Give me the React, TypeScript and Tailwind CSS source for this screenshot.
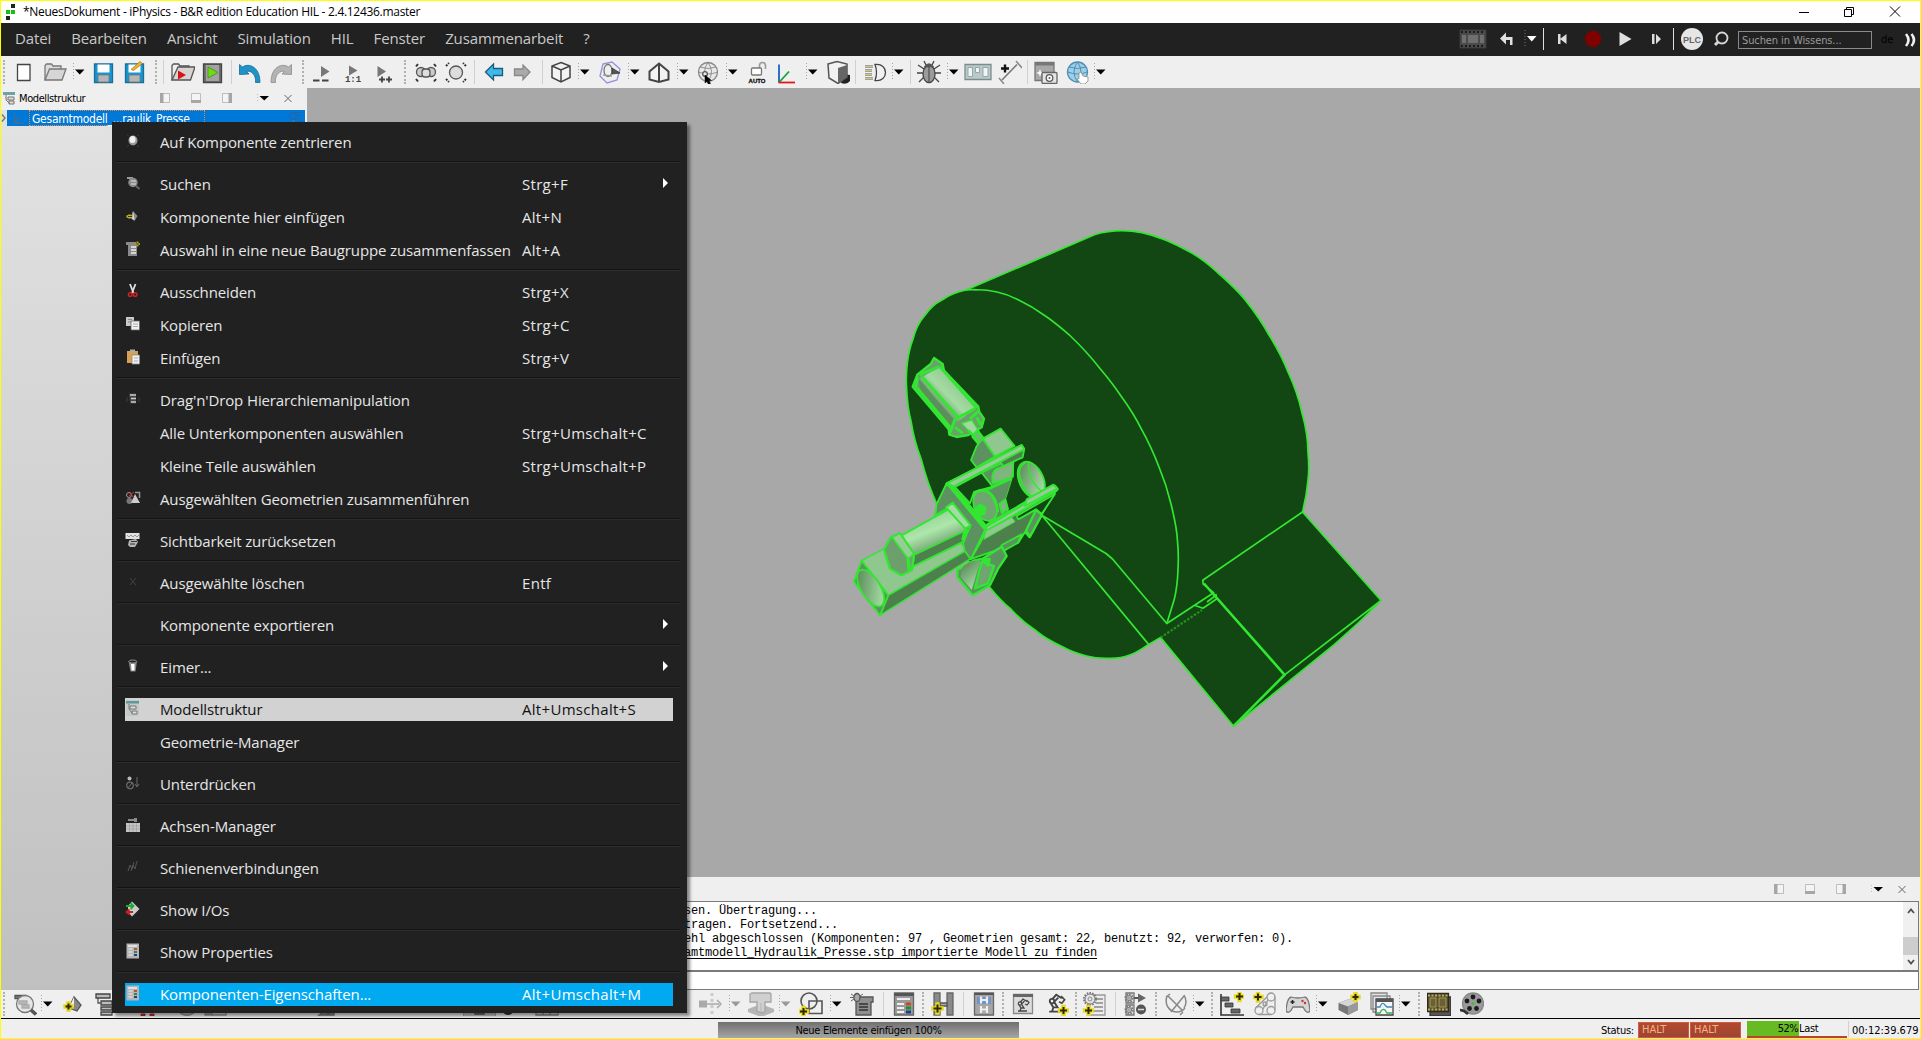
import React from "react";

type Kids = { children?: React.ReactNode };

/* ---------- shared pieces ---------- */

function Ico({ m = "", w = "w-6", box = "0 0 24 24", children }: Kids & { m?: string; w?: string; box?: string }) {
  return (
    <svg className={`h-6 shrink-0 ${w} ${m}`} viewBox={box} fill="none" stroke="#555" strokeWidth="1.3">
      {children}
    </svg>
  );
}

function Handle({ m }: { m: string }) {
  return <span className={`h-6 w-0 shrink-0 border-l-2 border-dotted border-[#b0b0b0] ${m}`} />;
}

function Sep({ m }: { m: string }) {
  return <span className={`h-6 w-px shrink-0 bg-[#cfcfcf] ${m}`} />;
}

function Drop({ m, c = "#000" }: { m: string; c?: string }) {
  return (
    <svg className={`h-6 w-3 shrink-0 ${m}`} viewBox="0 0 12 24">
      <path d="M.5 3v18" stroke="#a5a5a5" strokeWidth="1" strokeDasharray="1 2" />
      <path d="M2 9.5h9.5L6.75 14.5z" fill={c} />
    </svg>
  );
}

function Plus({ x, y, s = 4 }: { x: number; y: number; s?: number }) {
  const d = `M${x - s} ${y}h${2 * s}M${x} ${y - s}v${2 * s}`;
  return (
    <>
      <path d={d} stroke="#e8d81c" strokeWidth="4.4" strokeLinecap="square" />
      <path d={d} stroke="#2e2a00" strokeWidth="2" />
    </>
  );
}

function Robot({ x = 0, y = 0 }: { x?: number; y?: number }) {
  return (
    <g transform={`translate(${x} ${y})`}>
      <path d="M2 14h9M4 14l1-3-2.5-4 4.5-5 4 2.5M5 11h3l-2.5-4 3-3" stroke="#444" strokeWidth="1.3" />
      <path d="M10.5 3l2.5 2.5-2 2.5-2-1" stroke="#444" strokeWidth="1.2" />
      <circle cx="4" cy="6.5" r="1.6" fill="#eee" stroke="#444" />
    </g>
  );
}

function Gear({ x, y, r }: { x: number; y: number; r: number }) {
  return (
    <>
      <circle cx={x} cy={y} r={r} stroke="#777" strokeWidth="2" strokeDasharray="1.5 1.2" />
      <circle cx={x} cy={y} r={r - 1} stroke="#777" strokeWidth="1" fill="#e4e4e4" />
      <circle cx={x} cy={y} r={r / 3} stroke="#777" strokeWidth=".8" />
    </>
  );
}

function DockButtons() {
  return (
    <svg className="h-4 w-[136px] shrink-0" viewBox="0 0 136 16" fill="none" stroke="#bdbdbd">
      <path d="M1.5 3.5h9v9h-9zM32.5 3.5h9v9h-9zM63.5 3.5h9v9h-9z" fill="#f4f4f4" />
      <path d="M1 3h3.500v10H1zM32 10h10v3H32zM69.5 3H73v10h-3.500z" fill="#a6a6a6" stroke="none" />
      <path d="M98.5 4v8" strokeDasharray="1 2" />
      <path d="M100.5 6h9.500l-4.750 4.500z" fill="#000" stroke="none" />
      <path d="M125.5 5l7 7m0-7l-7 7" stroke="#666" />
    </svg>
  );
}

/* ---------- title and menu bars ---------- */

function TitleBar() {
  return (
    <div className="flex h-[22px] shrink-0 items-center bg-white">
      <svg className="ml-1 h-4 w-3" viewBox="0 0 12 16">
        <path d="M6 0h4v4H6zM1 12h4v4H1z" fill="#222" />
        <path d="M1 6h4v4H1zM6 6h4v4H6z" fill="#16c016" />
      </svg>
      <span className="ml-[6px] font-['Open_Sans','Noto_Sans',sans-serif] text-[12px] leading-none tracking-[-0.3px] whitespace-nowrap text-black">
        *NeuesDokument - iPhysics - B&amp;R edition Education HIL - 2.4.12436.master
      </span>
      <svg className="mr-[19px] mb-px ml-auto h-3 w-[103px]" viewBox="0 0 103 12" fill="none" stroke="#000">
        <path d="M1 6.5h10M46.5 3.5h7v7h-7zM48.5 3V1.500h7v7H54M92 .5l10 10m0-10l-10 10" />
      </svg>
    </div>
  );
}

const menus = ["Datei", "Bearbeiten", "Ansicht", "Simulation", "HIL", "Fenster", "Zusammenarbeit", "?"];

function MenuBar() {
  return (
    <div className="flex h-[33px] shrink-0 items-center bg-[#212121] font-['Open_Sans','Noto_Sans',sans-serif] text-[#c9c9c9]">
      <div className="mb-[2px] ml-[14px] flex gap-5 text-[15px] leading-none tracking-[-0.12px]">
        {menus.map((t) => (
          <span key={t}>{t}</span>
        ))}
      </div>
      <svg className="ml-auto h-[33px] w-[280px] shrink-0" viewBox="1456 23 280 33" fill="none">
        <path d="M1460 30h26v18h-26z" fill="#4b4b4b" stroke="#3a3a3a" />
        <path d="M1461 32h24M1461 46h24" stroke="#1c1c1c" strokeWidth="2" strokeDasharray="2 2" />
        <path d="M1462 35h4v8h-4zM1468 35h10v8h-10zM1480 35h4v8h-4z" fill="#6f6f6f" />
        <path d="M1500 38.500l6-6v4.500h6.500v8h-2.500v-5h-4v4.500z" fill="#e0e0e0" />
        <path d="M1525 30v17" stroke="#777" strokeDasharray="1 2" />
        <path d="M1527 36h9.500l-4.750 5.500z" fill="#fff" />
        <path d="M1543.5 28v22M1673.5 28v22" stroke="#e0e0e0" />
        <path d="M1558 34h2.500v10h-2.500zM1566.5 34v10l-6.500-5z" fill="#ddd" />
        <circle cx="1593" cy="39" r="8.2" fill="#800000" />
        <path d="M1619.5 32v14l12-7z" fill="#e0e0e0" />
        <path d="M1652 34h2.500v10h-2.500zM1656 34v10l5-5z" fill="#ddd" />
        <circle cx="1692" cy="39" r="11" fill="#e6e6e6" />
        <text x="1692" y="42.5" textAnchor="middle" fontSize="9" fontWeight="bold" fill="#666" fontFamily="Liberation Sans, sans-serif">
          PLC
        </text>
        <circle cx="1722" cy="38" r="5.5" stroke="#d8d8d8" strokeWidth="1.8" />
        <path d="M1718 42l-3 3" stroke="#d8d8d8" strokeWidth="3" />
      </svg>
      <div className="ml-[2px] flex h-[18px] w-[134px] shrink-0 items-center border border-[#8a8a8a] pt-px pl-[3px] font-['DejaVu_Sans_Condensed','Open_Sans',sans-serif] text-[11px] leading-none tracking-[-0.1px] text-[#9a9a9a]">
        Suchen in Wissens...
      </div>
      <span className="ml-[9px] w-[14px] shrink-0 font-['DejaVu_Sans_Condensed','Open_Sans',sans-serif] text-[11px] leading-none text-black">de</span>
      <svg className="mr-[3px] ml-[10px] h-[14px] w-3 shrink-0" viewBox="0 0 12 14" fill="none" stroke="#f0f0f0" strokeWidth="2.6">
        <path d="M1 1q5 6 0 12M6.5 1q5 6 0 12" />
      </svg>
    </div>
  );
}

/* ---------- upper toolbar ---------- */

function TopToolbar() {
  return (
    <div className="flex h-8 shrink-0 items-center bg-[#efefef]">
      <Handle m="ml-[2px]" />
      <Ico m="ml-[7px]">
        <path d="M5.5 4.500h12.500v16h-12.500z" fill="#fff" stroke="#444" />
      </Ico>
      <Ico m="ml-[7px]">
        <path d="M2 20V5.500L3.500 4h5l1.500 2h8v3" fill="#ddd" stroke="#777" />
        <path d="M2 20L6.500 9H23l-4 11z" fill="#d6d6d6" stroke="#777" />
      </Ico>
      <Drop m="ml-[6px]" />
      <Ico m="ml-[7px]">
        <path d="M2.5 4h18v18.500h-18z" fill="#1796cf" stroke="#1a6f98" />
        <path d="M5.5 4.500h12v8h-12z" fill="#fff" stroke="none" />
        <path d="M6 15h11v7H6z" fill="#b6b6b6" stroke="#777" strokeWidth=".8" />
      </Ico>
      <Ico m="ml-[7px]">
        <path d="M2.5 4h18v18.500h-18z" fill="#1796cf" stroke="#1a6f98" />
        <path d="M5.5 4.500h12v8h-12z" fill="#fff" stroke="none" />
        <path d="M6 15h11v7H6z" fill="#b6b6b6" stroke="#777" strokeWidth=".8" />
        <path d="M8 9.500l9-8 2.500 2-9 7z" fill="#f1b52c" stroke="#9a7420" strokeWidth=".7" />
      </Ico>
      <Handle m="ml-[8px]" />
      <Sep m="ml-[6px]" />
      <Ico m="ml-[7px]">
        <path d="M1 20V5.500L2.500 4h5l1.500 2h9l-1 3" fill="#eee" />
        <path d="M1 20L7 7h17l-4.500 13z" fill="#d4d4d4" />
        <path d="M7 10.500v9l8-4.500z" fill="#e01010" stroke="none" />
      </Ico>
      <Ico m="ml-[5px]">
        <path d="M3.5 4h18v18.500h-18z" fill="#6d6d6d" stroke="#444" />
        <path d="M6 5h13v16H6z" fill="#a2a2a2" stroke="none" />
        <path d="M8 7v11l10-5.500z" fill="#6ddb16" stroke="#3b8708" strokeWidth=".7" />
      </Ico>
      <Sep m="ml-[7px]" />
      <Ico m="ml-[6px]">
        <path d="M1.5 13V4.500l3 2.500C11 2.500 22 7 22 22.500h-4.500C18.500 15 13 10 8.500 11.500l2.500 2.500-9.500.5z" fill="#1d93c8" stroke="#186a90" strokeWidth=".8" />
      </Ico>
      <Ico m="ml-[7px]">
        <path d="M22.5 13V4.500l-3 2.500C13 2.500 2 7 2 22.500h4.500C5.500 15 11 10 15.500 11.500L13 14l9.500.5z" fill="#b4b4b4" stroke="#8a8a8a" strokeWidth=".8" />
      </Ico>
      <Handle m="ml-[9px]" />
      <Ico m="ml-[5px]">
        <path d="M12 6v11l8.500-5.500z" fill="#777" stroke="none" />
        <path d="M4 20.500h6.500M13 20.500h6.500" stroke="#444" strokeWidth="2.2" />
      </Ico>
      <Ico m="ml-[8px]">
        <path d="M8 5.500v10l8.500-5z" fill="#777" stroke="none" />
        <text x="12" y="22" textAnchor="middle" fontSize="9" fontWeight="bold" fill="#444" stroke="none" fontFamily="Liberation Mono, monospace">
          1:1
        </text>
      </Ico>
      <Ico m="ml-[7px]">
        <path d="M5.500 6v11l8.500-5.500z" fill="#777" stroke="none" />
        <path d="M7 19.500h6M10 16.500v6M14 19.500h6M17 16.500v6" stroke="#444" strokeWidth="1.8" />
      </Ico>
      <Handle m="ml-[8px]" />
      <Ico m="ml-[8px]">
        <path d="M2 6.500l2-2.500M22 6.500L20 4M2 19l2 2.500M22 19l-2 2.500" stroke="#333" strokeWidth="2" />
        <circle cx="7" cy="12" r="4.5" fill="#ccc" />
        <circle cx="17" cy="12" r="4.5" fill="#ccc" />
        <rect x="8" y="9" width="8" height="8" rx="3" fill="#ddd" />
      </Ico>
      <Ico m="ml-[6px]">
        <path d="M2 6l3-3M22 6l-3-3M2 19l3 3M22 19l-3 3" stroke="#333" strokeWidth="2" strokeDasharray="2 1" />
        <circle cx="12" cy="12.5" r="6.5" fill="#dcdcdc" />
      </Ico>
      <Sep m="ml-[6px]" />
      <Ico m="ml-[7px]">
        <path d="M3.5 12l8-8v4.500h9v7h-9V20z" fill="#3fb9ea" stroke="#1d5b78" />
      </Ico>
      <Ico m="ml-[4px]">
        <path d="M20 12l-7-7v4H4.500v6.500H13V19.500z" fill="#aaa" stroke="#888" />
      </Ico>
      <Sep m="ml-[8px]" />
      <Ico m="ml-[6px]">
        <path d="M12 2.500l9 3.500v11.500l-9 4.500-9-4.500V6zM3 6l9 4 9-4M12 10v12" fill="#f3f3f3" stroke="#444" strokeWidth="1.5" />
      </Ico>
      <Drop m="ml-[5px]" />
      <Ico m="ml-[8px]">
        <path d="M5 4l9-2 8 7-3 11-10 3-7-7z" stroke="#9496d8" strokeWidth="1.4" />
        <ellipse cx="10" cy="10.5" rx="4" ry="6" stroke="#777" />
        <path d="M14 8v6l8-1z" fill="#555" stroke="#333" strokeWidth=".8" />
        <path d="M5 15l9 1" stroke="#999" />
      </Ico>
      <Drop m="ml-[6px]" />
      <Ico m="ml-[7px]">
        <path d="M12 3.500l9.500 8v8L12 22l-9.500-2.500v-8zM12 3.500V22" fill="#f3f3f3" stroke="#444" strokeWidth="2" />
      </Ico>
      <Drop m="ml-[6px]" />
      <Ico m="ml-[7px]">
        <circle cx="12" cy="12" r="9.5" fill="#e9e9e9" stroke="#888" />
        <path d="M2.5 12q9.500 4 19 0M4 7q8 3 16 0M12 2.500q-7 9 0 19M12 2.500q7 9 0 19" stroke="#888" strokeWidth=".9" />
        <circle cx="9" cy="14" r="2.3" fill="#eee" />
        <path d="M9 15v8l2-1.500 1.500 3 2-1-1.500-3h2.500z" fill="#000" stroke="#000" strokeWidth=".5" />
      </Ico>
      <Drop m="ml-[6px]" />
      <Ico m="ml-[7px]">
        <path d="M14.5 9V5.500a3 3 0 016 0V9" stroke="#999" strokeWidth="1.6" />
        <rect x="6.5" y="8" width="10" height="7" rx="1" fill="#fff" stroke="#777" />
        <text x="12" y="22.5" textAnchor="middle" fontSize="6" fontWeight="900" fill="#111" stroke="#111" strokeWidth=".3" fontFamily="Liberation Sans, sans-serif">
          AUTO
        </text>
      </Ico>
      <Ico m="ml-[6px]">
        <path d="M4 4.500v18" stroke="#1565c0" strokeWidth="1.8" />
        <path d="M4 22.500l10-11" stroke="#0fa53a" strokeWidth="1.8" />
        <path d="M3.5 22.500H20" stroke="#e01a1a" strokeWidth="1.8" />
      </Ico>
      <Drop m="ml-[7px]" />
      <Ico m="ml-[9px]">
        <path d="M16 14l7 1v6q-3 4-9 2z" fill="#222" stroke="none" />
        <path d="M1 4l9-2.500L20 4v13l-9 6.500L2 18z" fill="#f1f1f1" stroke="#555" strokeWidth="1.5" />
        <path d="M11 8l9-3v12l-9 6z" fill="#666" stroke="none" />
      </Ico>
      <Sep m="ml-[4px]" />
      <Ico m="ml-[7px]">
        <path d="M2 6.500h8M2 10.500h7M2 14.500h7M2 18.500h8" stroke="#555" strokeWidth="2" />
        <path d="M2 6.500h8M2 10.500h7M2 14.500h7M2 18.500h8" stroke="#e6e38a" strokeWidth=".8" />
        <path d="M12 4.500c14-2 14 18 0 16q3-8 0-16z" fill="#f1f1f1" stroke="#444" />
      </Ico>
      <Drop m="ml-[5px]" />
      <Sep m="ml-[6px]" />
      <Ico m="ml-[6px]">
        <path d="M7 9L1 5M6 13H0M7 17l-5 5M17 9l6-4M18 13h6M17 17l5 5M9 5L7 1M15 5l2-4" stroke="#444" />
        <ellipse cx="12" cy="14" rx="6" ry="8.5" fill="#9b9b9b" stroke="#444" />
        <path d="M8 6.500q4-5 8 0z" fill="#555" />
        <path d="M12 7v15" />
      </Ico>
      <Drop m="ml-[6px]" />
      <Ico m="ml-[5px]" w="w-7" box="0 0 28 24">
        <path d="M1 4.500h26v15H1z" fill="#b9c8c8" stroke="#7f8c8c" />
        <path d="M4 7.500h4.500v9H4zM11.500 7.500h4v5h-4zM19 7.500h5v9h-5z" fill="#eef3f3" stroke="#8c9999" strokeWidth=".8" />
      </Ico>
      <Ico m="ml-[6px]">
        <path d="M1 18l5 6M18 1l6 7" stroke="#888" strokeWidth="1.5" />
        <path d="M4 20L19 4.500" stroke="#777" strokeWidth="1.6" />
        <path d="M3 8.500h8M7 4.500v8" stroke="#111" strokeWidth="2.4" />
      </Ico>
      <Sep m="ml-[5px]" />
      <Ico m="ml-[6px]">
        <path d="M1 2.500h19v18H1z" fill="#a8a8a8" stroke="#777" />
        <path d="M1 2.500h19v3H1z" fill="#777" stroke="none" />
        <path d="M6 9l1 3 3 1-3 1-1 3-1-3-3-1 3-1z" fill="#fff" stroke="none" />
        <rect x="8" y="12.5" width="15" height="11" rx="1" fill="#e5e5e5" stroke="#666" />
        <circle cx="15.5" cy="18" r="3.3" fill="#fff" stroke="#555" />
        <circle cx="15.5" cy="18" r="1" fill="#555" stroke="none" />
      </Ico>
      <Ico m="ml-[8px]">
        <circle cx="11.5" cy="12" r="10" fill="#9dcfe8" stroke="#4f8fb3" />
        <path d="M2 12q9.500 4 19 0M3 7q8 3 17 0M11.500 2q-7 10 0 20M11.500 2q7 10 0 20" stroke="#4f8fb3" strokeWidth="1" />
        <path d="M13 13l2-1 2 4 5 1v4l-3 3h-4l-4-5 2-.5z" fill="#fff" stroke="#888" strokeWidth=".8" />
      </Ico>
      <Drop m="ml-[4px]" />
    </div>
  );
}

/* ---------- model structure dock ---------- */

function ModelDock() {
  return (
    <div className="flex w-[304px] shrink-0 flex-col bg-[#efefef] font-['DejaVu_Sans_Condensed','Open_Sans',sans-serif]">
      <div className="flex h-[22px] shrink-0 items-center pb-[2px]">
        <svg className="ml-[2px] h-4 w-3 shrink-0" viewBox="0 0 12 16" fill="none">
          <path d="M0 2h12v3H0z" fill="#6fa3a3" />
          <path d="M3 5v5l4 4M5 7h6v3H5zM6 11h5v3H6z" stroke="#777" fill="#ddd" />
        </svg>
        <span className="ml-[4px] text-[11px] leading-none tracking-[-0.4px] whitespace-nowrap text-black">Modellstruktur</span>
        <span className="ml-auto flex pr-[10px]">
          <DockButtons />
        </span>
      </div>
      <div className="flex-1 bg-linear-to-b from-[#e2e2e2] to-[#c0c0c0]">
        <div className="flex h-4 items-center">
          <svg className="h-4 w-[6px] shrink-0" viewBox="0 0 6 16" fill="none">
            <path d="M1 4.500l3 3.500-3 3.500" stroke="#777" strokeWidth="1.4" />
          </svg>
          <div className="flex h-4 flex-1 items-center bg-[#0078d7]">
            <svg className="ml-[5px] h-4 w-[12px] shrink-0" viewBox="0 0 12 16" fill="none" stroke="#3f6f98" strokeWidth="1.4">
              <path d="M2.500 3v10H12M2.500 13l5-6" />
            </svg>
            <span className="ml-[5px] flex h-4 w-[176px] items-center border border-dotted border-[#e88a3a] pt-[2px] pl-[2px] text-[12px] leading-none tracking-[-0.25px] whitespace-nowrap text-white">
              Gesamtmodell_...raulik_Presse
            </span>
            <svg className="mr-[4px] ml-auto h-4 w-3" viewBox="0 0 12 16" fill="none" stroke="#29649b">
              <circle cx="4" cy="6" r="3.5" />
              <path d="M6 2.500h6M8 5.500h4M8 8.500h4M8 11.500h4" />
              <path d="M2 13h5M4.500 10.500v5" stroke="#6a8a3a" />
            </svg>
          </div>
        </div>
      </div>
    </div>
  );
}

/* ---------- 3D viewport ---------- */

function Viewport() {
  return (
    <svg className="h-[789px] w-full shrink-0 bg-[#a8a8a8]" viewBox="307 88 1613 789" fill="none" stroke="#32e632" strokeWidth="1.7" strokeLinejoin="round">
      <defs>
        <linearGradient id="cylA" x1="0" y1="1" x2="1" y2="0">
          <stop offset=".25" stopColor="#4f7f4f" />
          <stop offset=".5" stopColor="#a5dca3" />
          <stop offset=".75" stopColor="#8fc78f" />
        </linearGradient>
        <linearGradient id="cylB" x1="0" y1="0" x2=".5" y2="1">
          <stop offset=".2" stopColor="#8fcf8f" />
          <stop offset=".5" stopColor="#aee6ac" />
          <stop offset=".9" stopColor="#5a8a5a" />
        </linearGradient>
        <linearGradient id="bore" x1="0" y1="0" x2=".6" y2="1">
          <stop offset="0" stopColor="#4f7f4f" />
          <stop offset="1" stopColor="#a5dca3" />
        </linearGradient>
      </defs>
      <path
        d="M966 290L1073 244 1095 234.500C1112 229.500 1128 230 1142 232.600 1158 236 1174 243 1190 252 1201 258 1209 264.500 1217.500 272.500 1228 281.500 1237 290 1245 299.600 1254 311 1262 322 1269 335 1277 348 1283 359 1288 372 1294 385 1299 399 1302 413 1306 427 1308 440 1308 453 1309 463 1309 472 1308 480 1307 492 1305 502 1302.500 512L1381 600.500C1367 615 1350 631 1334.500 644.400L1233.600 726.200 1160.600 637.600 1148.600 644.400C1142 649 1136 653 1129.700 655 1123 657.500 1116 658.500 1109 658.300 1101 658.500 1094 658 1086.600 656 1078 654 1070 651 1062.500 646.800 1052 642 1043 637 1035 630 1026 624 1018 617 1010.800 609 1003 603 996 595 989.500 587 967 562 949 534 936.800 504 930 489 925 474 921 458.500 916 446 913 434 911 421 908 410 907 398 906.500 386 906 378 906.500 370 907.500 362 908.500 354 910 347 912.700 340 915 331 919 322 924.800 315.500 930 308 936 303 942 300 949 295 957 292 966 290z"
        fill="#124612"
      />
      <path
        d="M966 290C970 289.500 973 289.500 976.400 289.800 984 289.500 990 290.500 997 292 1004 293.500 1011 296 1017.700 299.600 1027 304 1037 310 1045 315.800 1053 321 1061 328 1069.400 335 1081 346 1091 357 1100.400 369 1108 378 1115 387 1121 396 1129 407 1136 418 1141.700 429.700 1148 441 1154 454 1159 467 1164 479 1168 491 1171 504 1174 516 1177 529 1177.500 541.300 1178.500 551 1178.500 562 1177.900 571.700 1177.500 581 1176.500 590 1174.400 598.800 1172 607 1169.500 615 1166.800 623.500"
      />
      <path d="M1148.600 644.400L1041.800 515.300 1106 553.500 1112.500 559 1166.800 623.500 1214 592.500M1302.500 512L1202.700 580.200l.5 4 11 9M1284.600 674.800L1381 600.500M1195 605.500l8 2.700 13.800-9.400-1-5M1207 602l8-6" />
      <path d="M1204 583.500L1284.600 674.800 1233.600 726.200" strokeWidth="2.600" />
      <path d="M1160.600 637.600L1202 610" strokeDasharray="2.5 1.5" stroke="#229222" strokeWidth="2.200" />

      <g transform="translate(840 340) scale(.33333)" strokeWidth="5.5">
        {/* slanted cylinder with its end plates */}
        <path d="M218 140L232 104 272 72 282 54 308 72 312 92 415 200 418 216 432 236 425 262 385 285 350 291 328 284 326 268z" fill="#6d9f6d" strokeWidth="7" />
        <path d="M240 115L298 82 405 205 345 252z" fill="url(#cylA)" stroke="none" />
        <path d="M236 118L240 150 330 262 348 245z" fill="#5d8f5d" stroke="none" />
        <path d="M244 108L354 232M300 80L410 204M240 104L298 80M345 238l60-32M345 238l-15 40M232 145L330 262" strokeWidth="9" />
        <path d="M232 112l-6 34M345 262l24 18M410 232l12 22M418 212l-28 24" strokeWidth="9" />
        <path d="M365 250l30-10 22 34-20 10z" fill="#a0d8a0" strokeWidth="4" />
        <path d="M385 270l12 14 16 20M412 272l16 20-10 22-20-24z" strokeWidth="8" fill="#79b379" />

        {/* block beneath the rod */}
        <path d="M428 296L482 266 524 318 465 350z" fill="#8fc78f" />
        <path d="M428 296L465 350 410 382 393 360 410 318z" fill="#5c9160" />
        <path d="M425 398L520 352 518 412 455 440z" fill="#5c9160" />
        <path d="M458 430q-6-40 20-46l42-20-2 48z" fill="#7fb67f" />
        <path d="M398 470L518 415 498 480 505 520 450 545z" fill="#5c9160" />

        {/* frame */}
        <path d="M320 430L545 315 553 326 548 352 490 378 480 365 345 441 437 556 640 436 652 445 605 524 568 592 555 576 535 608 390 658 372 630 380 560 335 490 285 525z" fill="#4d804d" />
        <path d="M345 441L425 398 458 440 402 456 390 490z" fill="#124612" />
        <path d="M518 415L535 400 570 470 505 505 498 478z" fill="#124612" stroke="none" />
        <path d="M320 430L545 315 552 328 340 440z" fill="#96cc96" />
        <path d="M328 432L437 558 645 438 652 448 440 572 392 656" fill="none" strokeWidth="8" />
        <path d="M437 562L645 438 650 452 440 572z" fill="#96cc96" />
        <path d="M437 574L515 532 525 545 432 598z" fill="#8fc78f" strokeWidth="3" />
        <path d="M530 528L645 462 605 522 588 508 535 538z" fill="#124612" />
        <path d="M588 510L606 524 570 590 558 572z" fill="#5c9160" strokeWidth="7" />
        <path d="M485 615l60-32-12 26-50 28z" fill="#5c9160" />

        {/* pulley and ring */}
        <ellipse cx="436" cy="496" rx="34" ry="48" transform="rotate(-22 436 496)" fill="#6fa66f" />
        <path d="M412 455q45-18 62 60M400 470q10-22 28-20" strokeWidth="7" />
        <path d="M400 508l20-18 20 12-4 22-22 6z" fill="#32e632" stroke="none" />
        <path d="M478 492l18-14 8 28-18 14z" fill="#7fb67f" />
        <ellipse cx="574" cy="420" rx="36" ry="58" transform="rotate(-25 574 420)" fill="url(#bore)" />
        <path d="M566 368q-6 52 44 90M556 368q-30 20-10 60t32 42" strokeWidth="4" />
        <path d="M560 478L640 434 652 446 555 498z" fill="#96cc96" />

        {/* lower valve */}
        <path d="M352 690L400 662 430 655 485 620 500 648 475 685 450 736 398 766 352 712z" fill="#5c9160" strokeWidth="7" />
        <path d="M362 690q20-30 60-28L395 750 362 712z" fill="url(#bore)" stroke="none" />
        <path d="M425 665L462 678 444 730 405 745z" fill="#6fa66f" strokeWidth="7" />
        <path d="M430 660l18-2-4 18z" strokeWidth="9" />

        {/* square tube */}
        <path d="M65 662L140 622 362 608 380 632 145 766z" fill="#8fc78f" strokeWidth="4" />
        <path d="M145 766L378 632 392 656 120 826z" fill="#4d804d" strokeWidth="4" />
        <path d="M65 662L145 766 120 826 42 725z" fill="#5c9160" />
        <ellipse cx="92" cy="744" rx="29" ry="62" transform="rotate(-31 92 744)" fill="url(#bore)" />

        {/* plate joining tube and frame */}
        <path d="M320 430L290 492 286 526 330 500 390 562 368 604 374 632 392 658 435 570z" fill="#5c9160" />
        <path d="M328 434L436 566" strokeWidth="9" />

        {/* lying cylinder */}
        <path d="M178 590L325 508 384 572 372 604 225 672 190 660z" fill="url(#cylB)" />
        <path d="M222 645L380 570 372 604 218 680z" fill="#4d804d" />
        <path d="M132 628L152 592 180 580 222 642 216 690 184 706 150 686z" fill="#6d9f6d" strokeWidth="7" />
        <path d="M156 592L180 580 222 642 204 656z" fill="#96cc96" strokeWidth="5" />
        <path d="M204 656L208 692" strokeWidth="10" />
        <path d="M318 502L338 488 392 556 376 566z" fill="#a5dba5" strokeWidth="6" />
        <path d="M376 566L368 602" strokeWidth="9" />
      </g>
    </svg>
  );
}

/* ---------- console ---------- */

function Console() {
  return (
    <div className="mr-px flex h-[113px] flex-col bg-[#efefef]">
      <div className="flex h-6 shrink-0 items-center justify-end pr-[10px]">
        <DockButtons />
      </div>
      <div className="flex h-[71px] shrink-0 border border-b-2 border-[#7a7a7a] bg-white">
        <div className="flex-1 overflow-hidden pt-[2px] pl-[376px] font-['Liberation_Mono',monospace] text-[12px] leading-[14px] tracking-[-0.2px] whitespace-pre text-black">
          <div>sen. Übertragung...</div>
          <div>tragen. Fortsetzend...</div>
          <div>ehl abgeschlossen (Komponenten: 97 , Geometrien gesamt: 22, benutzt: 92, verworfen: 0).</div>
          <div className="underline underline-offset-2">amtmodell_Hydraulik_Presse.stp importierte Modell zu finden</div>
        </div>
        <div className="flex w-[15px] flex-col items-center justify-between bg-[#f0f0f0]">
          <svg className="mt-[5px] h-2 w-2" viewBox="0 0 8 8" fill="none" stroke="#505050" strokeWidth="1.8">
            <path d="M1 6l3-3.500L7 6" />
          </svg>
          <span className="mt-[18px] h-[18px] w-[15px] bg-[#cdcdcd]" />
          <svg className="mb-1 h-2 w-2" viewBox="0 0 8 8" fill="none" stroke="#505050" strokeWidth="1.8">
            <path d="M1 2l3 3.500L7 2" />
          </svg>
        </div>
      </div>
      <div className="flex-1 border-x border-b border-[#7a7a7a] bg-white" />
    </div>
  );
}

/* ---------- lower toolbar ---------- */

function BottomToolbar() {
  return (
    <div className="flex h-7 shrink-0 items-center bg-[#efefef]">
      <Handle m="ml-[2px]" />
      <Ico m="ml-[8px]">
        <path d="M2 3.500h11v3H2z" fill="#777" />
        <circle cx="12" cy="12" r="8.5" fill="#e6e6e6" stroke="#777" />
        <path d="M6 9h8v3H6zM9 13h7v3H9z" fill="#bbb" stroke="#aaa" />
        <path d="M18 18l5 4.500" strokeWidth="3.5" />
      </Ico>
      <Drop m="ml-[4px]" />
      <Ico m="ml-[7px]">
        <path d="M14 5l7 8-4 6-8-3z" fill="#888" stroke="#555" />
        <path d="M14 5l-5 11 5-1z" fill="#eee" stroke="none" />
        <Plus x={8.5} y={14.5} s={3} />
      </Ico>
      <Ico m="ml-[10px]">
        <path d="M2 2h14v4H2zM7 9h11v4H7zM7 15h11v3H7zM7 20h11v3H7z" fill="#bbb" stroke="#444" />
        <path d="M4 6v5h3" />
      </Ico>
      <Ico m="ml-[18px]">
        <path d="M5 22h4v2H5zM14 22h4v2h-4z" fill="#d33" stroke="#a11" strokeWidth=".8" />
      </Ico>
      <Ico m="ml-[15px]">
        <circle cx="12" cy="14" r="9.5" fill="#bbb" stroke="#999" />
      </Ico>
      <Ico m="ml-[4px]">
        <path d="M2 10h8v13H2z" fill="#c9a070" stroke="#999" />
        <path d="M9 12h14v11H9z" fill="#ddd" stroke="#999" />
      </Ico>
      <Ico m="ml-[89px]">
        <path d="M3 23l6-4 3 3 6-3v4z" fill="#999" stroke="#777" />
      </Ico>
      <Ico m="ml-[123px]" w="w-[33px]" box="0 0 33 24">
        <path d="M0 0h33v25H0z" fill="#c4c4c4" stroke="#999" />
        <path d="M12 14h9v8h-9z" />
      </Ico>
      <Ico>
        <circle cx="12" cy="17" r="5" stroke="#333" strokeWidth="2" />
      </Ico>
      <Ico m="ml-[15px]">
        <path d="M1 8h22v15H1zM8 8v15M15 8v15M1 18h22" fill="#ddd" stroke="#888" />
      </Ico>
      <Ico m="ml-[139px]">
        <path d="M1 8.500h8v7H1z" fill="#aaa" stroke="none" />
        <path d="M9 12h12M19 8l4 4-4 4" stroke="#aaa" strokeWidth="1.5" />
        <path d="M14 1v22" stroke="#ccc" strokeWidth="3" strokeDasharray="3 3" />
      </Ico>
      <Drop m="ml-[7px]" c="#999" />
      <Ico m="ml-[6px]" w="w-7" box="0 0 28 24">
        <path d="M1 17l13-5 13 5v3l-13 5-13-5z" fill="#b5b5b5" stroke="none" />
        <path d="M3 2l2-1h18l1 1v8h-6v9l-3 2-5-2v-9H3z" fill="#d0d0d0" stroke="#a5a5a5" />
        <path d="M14 11v9" stroke="#bbb" />
      </Ico>
      <Drop m="ml-[4px]" c="#999" />
      <Ico m="ml-[8px]">
        <circle cx="10" cy="9" r="8" stroke="#555" strokeWidth="1.6" />
        <path d="M10 9h13v12.500H10z" stroke="#555" strokeWidth="1.6" />
        <Plus x={4.5} y={19.5} s={3.5} />
      </Ico>
      <Drop m="ml-[7px]" />
      <Ico m="ml-[8px]">
        <path d="M6 5h17v5h-2v13H6z" fill="#8f8f8f" stroke="#555" />
        <path d="M9 12h9M9 15h9M9 18h9" stroke="#333" />
        <ellipse cx="7" cy="5.5" rx="3" ry="4" fill="#aaa" stroke="#555" />
        <path d="M1 2l3 2M1 9l3-2M13 2l-3 2M0 5.500h4" strokeWidth=".9" />
      </Ico>
      <Sep m="ml-[9px]" />
      <Ico m="ml-[8px]">
        <path d="M2.5 1h19v22h-19z" fill="#9a9a9a" stroke="#666" />
        <path d="M2.5 1h19v3h-19z" fill="#555" stroke="none" />
        <path d="M5 7h13M5 12h7M5 16h7M5 20h7" stroke="#eee" strokeWidth="2" />
        <path d="M14 12h5" stroke="#c84a18" strokeWidth="3" />
        <path d="M14 16h5" stroke="#14903a" strokeWidth="3" />
        <path d="M14 20h5" stroke="#203a90" strokeWidth="3" />
      </Ico>
      <Handle m="ml-[6px]" />
      <Ico m="ml-[7px]">
        <path d="M3 1h6v22H3zM16 1h6v22h-6z" fill="#8a8a8a" stroke="#666" />
        <path d="M9 11h7v3H9z" fill="#aaa" />
        <Plus x={6.5} y={16.5} s={4} />
      </Ico>
      <Sep m="ml-[8px]" />
      <Ico m="ml-[8px]">
        <path d="M2.5 1h19v22h-19z" fill="#a5a5a5" stroke="#666" />
        <path d="M2.5 1h19v2h-19z" fill="#555" stroke="none" />
        <path d="M5 5h14v7H5z" fill="#6f93c8" stroke="none" />
        <path d="M9 4.500v7M15 4.500v7M9 8h6M9 14v7M15 14v7M9 17.500h6" stroke="#eee" strokeWidth="2.2" />
      </Ico>
      <Handle m="ml-[6px]" />
      <Ico m="ml-[7px]">
        <path d="M2.5 2.500h19v19h-19z" fill="#dcdcdc" stroke="#888" />
        <path d="M2 2h20v3H2z" fill="#666" stroke="none" />
        <Robot x={5} y={5} />
      </Ico>
      <Ico m="ml-[10px]">
        <g transform="scale(1.4)">
          <Robot x={1} y={0} />
        </g>
        <Plus x={18.5} y={18.5} s={3.5} />
      </Ico>
      <Handle m="ml-[6px]" />
      <Ico m="ml-[5px]">
        <path d="M7 3h16v20H7z" fill="#ececec" stroke="#999" />
        <path d="M14 7h7M14 11h7M12 15h9M12 19h9" stroke="#888" />
        <Gear x={8} y={7} r={6} />
        <Plus x={6.5} y={18.5} s={3.5} />
      </Ico>
      <Sep m="ml-[9px]" />
      <Ico m="ml-[8px]">
        <path d="M2 1h8v10H2zM2 13h8v10H2z" fill="#d5d5d5" stroke="#777" />
        <Gear x={5} y={6} r={3.5} />
        <Gear x={5} y={18} r={3.5} />
        <path d="M10 6h5" strokeWidth="2" />
        <path d="M14 1.500v9l8-4.500z" fill="#666" stroke="none" />
        <circle cx="17" cy="17.5" r="5" fill="#555" stroke="none" />
        <path d="M14 17.500h6" stroke="#ddd" strokeWidth="1.5" />
      </Ico>
      <Handle m="ml-[7px]" />
      <Ico m="ml-[7px]">
        <path d="M3 4q-3 10 5 15 8 3 13-3M20 3q4 7 0 13" stroke="#888" strokeWidth="1.5" />
        <path d="M4 4l15 15M20 4L7 20M2 5l4-3M19 20l-3 3" stroke="#888" strokeWidth="1.5" />
      </Ico>
      <Drop m="ml-[5px]" />
      <Handle m="ml-[6px]" />
      <Ico m="ml-[7px]">
        <path d="M1 2v21h23" stroke="#333" strokeWidth="1.6" />
        <path d="M1 5h8v4H1zM5 11h8v4H5zM11 17h9v4h-9z" fill="#666" stroke="#333" strokeWidth=".8" />
        <Plus x={19.5} y={4.5} s={3.5} />
      </Ico>
      <Ico m="ml-[9px]">
        <circle cx="18" cy="5" r="4" stroke="#999" />
        <circle cx="6" cy="18.5" r="4" stroke="#999" />
        <circle cx="18" cy="18.5" r="4" stroke="#999" />
        <path d="M14 5L2.500 16M22 5v13M6 22.500h12M10 17l5-9" stroke="#999" />
        <circle cx="12" cy="12" r="2" stroke="#999" />
        <Plus x={5} y={5} s={3.5} />
      </Ico>
      <Ico m="ml-[9px]">
        <path d="M5 5q7 2 14 0 4 1 5 14-3 4-7-4H7q-4 8-7 4Q1 6 5 5z" fill="#d5d5d5" stroke="#777" />
        <path d="M4.5 10h4M6.500 8v4" stroke="#222" strokeWidth="1.4" />
        <circle cx="16.5" cy="9" r="1.2" fill="#c33" stroke="none" />
        <circle cx="19" cy="11" r="1.2" fill="#c33" stroke="none" />
      </Ico>
      <Drop m="ml-[6px]" />
      <Ico m="ml-[9px]">
        <path d="M1.5 11L12 7l9 3v8l-10 5-9.500-5z" fill="#777" stroke="none" />
        <path d="M1.5 11L12 7l9 3-10 4.500z" fill="#d5d5d5" stroke="none" />
        <path d="M11 14.500V23l10-5v-8z" fill="#999" stroke="none" />
        <Plus x={18.5} y={5} s={3} />
      </Ico>
      <Ico m="ml-[9px]">
        <path d="M1 1h16v16H1zM3 4h17v16H3z" fill="#e5e5e5" stroke="#888" />
        <path d="M6 7h17v16H6z" fill="#f6f6f6" stroke="#444" />
        <path d="M6 7h17v3H6z" fill="#555" stroke="none" />
        <path d="M7 15h3q2-6 5-2l2 2h5" stroke="#3a8bc0" />
        <path d="M7 21h3q2-5 5-3l2 3h5" stroke="#35b050" />
      </Ico>
      <Drop m="ml-[5px]" />
      <Handle m="ml-[7px]" />
      <Ico m="ml-[7px]">
        <path d="M3 5h21v19H3z" fill="#555" stroke="#333" />
        <path d="M.5 1.500h21v18H.5z" fill="#55502f" stroke="#2e2b18" />
        <path d="M1 3.500h20M1 17.500h20" stroke="#b9a85a" strokeWidth="2" strokeDasharray="2 1.5" />
        <path d="M3 6h6v9H3zM12 6h7v9h-7z" fill="#6a6036" stroke="#b9a85a" strokeWidth=".8" />
      </Ico>
      <Ico m="ml-[9px]">
        <circle cx="13" cy="11.5" r="10.5" fill="#9a9a9a" stroke="#888" />
        <g fill="#1c1c1c" stroke="none">
          <circle cx="13" cy="5" r="2.4" />
          <circle cx="7" cy="9" r="2.4" />
          <circle cx="19" cy="9" r="2.4" />
          <circle cx="9.5" cy="16.5" r="2.4" />
          <circle cx="16.5" cy="16.5" r="2.4" />
        </g>
        <circle cx="13" cy="11.5" r="1.6" fill="#3fbf2f" stroke="none" />
        <path d="M0 18q4 0 8 4" stroke="#333" strokeWidth="2.5" />
      </Ico>
    </div>
  );
}

/* ---------- status bar ---------- */

function StatusBar() {
  return (
    <div className="flex h-5 shrink-0 items-center border-t border-black bg-[#efefef] font-['DejaVu_Sans_Condensed','Open_Sans',sans-serif] text-[11px] leading-none tracking-[-0.3px] whitespace-nowrap text-black">
      <div className="mt-[3px] ml-[717px] flex h-4 w-[301px] items-center justify-center bg-linear-to-b from-[#707070] to-[#a6a6a6]">
        Neue Elemente einfügen 100%
      </div>
      <span className="mt-[3px] ml-auto w-[37px]">Status:</span>
      <div className="mt-[2px] flex h-4 w-[51px] items-center border border-[#cf5a44] bg-linear-to-b from-[#b24a2c] to-[#9c4434] pl-[3px] tracking-[0px] text-[#f7b183]">HALT</div>
      <div className="mt-[2px] ml-px flex h-4 w-[51px] items-center border border-[#cf5a44] bg-linear-to-b from-[#b24a2c] to-[#9c4434] pl-[3px] tracking-[0px] text-[#f7b183]">HALT</div>
      <div className="mt-[1px] ml-[6px] flex h-[17px] w-[100px] border-b-2 border-[#b5452b]">
        <span className="flex w-[52px] items-center justify-end bg-[#66bb22] pr-[1px] pt-px tracking-[-0.6px]">52%</span>
        <span className="flex items-center pt-px">Last</span>
      </div>
      <span className="ml-[1px] h-4 w-px bg-[#cfcfcf]" />
      <span className="mt-[3px] ml-[3px] w-[68px] tracking-[0px]">00:12:39.679</span>
    </div>
  );
}

/* ---------- context menu ---------- */

const glyphs: Record<string, React.ReactNode> = {
  center: (
    <>
      <ellipse cx="8" cy="7.5" rx="4.500" ry="5" fill="#999" />
      <ellipse cx="7.5" cy="6.5" rx="3" ry="3.500" fill="#f0f0f0" />
      <path d="M2 2l2 1M14 2l-2 1M2 14l2-2M14 14l-2-2" stroke="#3a3a3a" />
    </>
  ),
  find: (
    <>
      <path d="M2 2h6v2H2z" fill="#999" />
      <circle cx="8" cy="7.5" r="4.7" fill="#8d8d8d" />
      <path d="M6 6h5M6 9h5" stroke="#c5c5c5" strokeWidth="1.5" />
      <path d="M11 11l3.500 3" stroke="#666" strokeWidth="2" />
    </>
  ),
  insert: (
    <>
      <path d="M8 3l4.500 5-3 5-4-3z" fill="#8a8a8a" />
      <path d="M8 3L7 11l2.500 1z" fill="#ddd" />
      <path d="M1.5 8.500h6M4.500 6.500v4" stroke="#c9b818" strokeWidth="2.4" />
      <path d="M3 8.500h4" stroke="#333" />
    </>
  ),
  group: (
    <>
      <path d="M1 1h10v3H1zM3 4h9v11H3z" fill="#8a8a8a" />
      <path d="M6 6h5M6 9h5M6 12h5" stroke="#eee" strokeWidth="1.4" />
      <path d="M10 3h5M12.5 .5v5" stroke="#a89a1c" strokeWidth="2" />
      <path d="M11.5 3h2" stroke="#333" />
    </>
  ),
  cut: (
    <>
      <path d="M5 1l3.500 9M10.500 1L7 10" stroke="#e0e0e0" strokeWidth="1.8" />
      <circle cx="5.2" cy="11.500" r="1.800" stroke="#c22" strokeWidth="1.5" />
      <circle cx="10.2" cy="11.500" r="1.800" stroke="#c22" strokeWidth="1.5" />
    </>
  ),
  copy: (
    <>
      <path d="M1 1h8v9H1z" fill="#c9c9c9" />
      <path d="M3 3.500h4M3 6h3" stroke="#888" />
      <path d="M6 5h8.500v9H6z" fill="#f0f0f0" stroke="#666" strokeWidth=".8" />
      <path d="M8 8h5M8 10.500h5" stroke="#aaa" />
    </>
  ),
  paste: (
    <>
      <path d="M2 2h11v12H2z" fill="#d9a04e" />
      <path d="M5 .5h5v3H5z" fill="#aaa" />
      <path d="M7 6h7.500v9H7z" fill="#f0f0f0" stroke="#888" strokeWidth=".8" />
      <path d="M9 9h4M9 12h4" stroke="#aaa" />
    </>
  ),
  drag: (
    <>
      <path d="M4 2.500h7v10H5z" fill="#444" />
      <path d="M5 4h6M6 7.500h5M6 11h5" stroke="#ccc" strokeWidth="1.3" />
      <path d="M2 6v5M14 6v5" stroke="#3c3c3c" />
    </>
  ),
  merge: (
    <>
      <circle cx="4" cy="5" r="2.5" stroke="#999" />
      <circle cx="4.5" cy="11" r="3" fill="#777" />
      <path d="M6 13l4-9 5 9z" fill="#ccc" />
      <path d="M4 6l5-4M5 3l4 5" stroke="#c33" />
      <path d="M10 2.500h4.500V8" stroke="#999" strokeWidth="1.5" />
    </>
  ),
  reset: (
    <>
      <path d="M.5 1h14v6H.5z" fill="#e2e2e2" />
      <path d="M2 3l2 2 2-2 2 2 2-2 2 2 2-2" stroke="#888" strokeWidth=".8" />
      <path d="M4 8.500l7-1.500 2 3-3 5H5l-2-2z" fill="#b5b5b5" />
      <path d="M6 9.500h6M5 12h5" stroke="#333" />
    </>
  ),
  remove: <path d="M5 4l6 7m0-7l-6 7" stroke="#444" />,
  bucket: (
    <>
      <path d="M3.5 3h8.500l-1.500 10.500h-5z" fill="#888" />
      <ellipse cx="7.75" cy="3.5" rx="4" ry="1.500" fill="#222" stroke="#aaa" strokeWidth=".8" />
      <path d="M6 6h3.500v6.500H6.500z" fill="#fff" />
    </>
  ),
  tree: (
    <>
      <path d="M1 0h13v16H1z" fill="#c2caca" />
      <path d="M1 1h13v2.500H1z" fill="#5f9898" />
      <path d="M4 4v5l3 4M5 6h6v3H5zM7 11h5v3H7z" stroke="#777" fill="#ddd" />
    </>
  ),
  suppress: (
    <>
      <circle cx="4.5" cy="3.5" r="2" fill="#bbb" />
      <circle cx="5" cy="10.5" r="3.300" stroke="#6a6a6a" strokeWidth="1.3" />
      <path d="M3 13l4-5M12 2v10M10 9l2 3 2-3" stroke="#6a6a6a" />
    </>
  ),
  axes: (
    <>
      <path d="M3 2h7v2H3zM9 1h3v4H9z" fill="#8a8a8a" />
      <path d="M1 6h14v9H1z" fill="#c5c5c5" />
      <path d="M1 9h14M1 12h14M4.500 6v9M8 6v9M11.500 6v9" stroke="#999" strokeWidth=".6" />
    </>
  ),
  rails: <path d="M3 12l2-6 2 4 2-7M6 12l2-6 2 4 2-8" stroke="#555" />,
  io: (
    <>
      <path d="M7 .5l7.500 7.500L7 15.500 3 11V5z" fill="#ccc" />
      <path d="M1 5h7M5.500 2L8.500 5l-3 3" stroke="#17b02e" strokeWidth="1.8" />
      <path d="M8 11H2M4.500 8.500L1.500 11l3 2.500" stroke="#c91f1f" strokeWidth="1.8" />
    </>
  ),
  props: (
    <>
      <path d="M1.5 .5h12.500v15h-12.500z" fill="#b5b5b5" />
      <path d="M3 3h9" stroke="#eee" strokeWidth="1.500" />
      <path d="M3.5 6h4M3.5 9h4M3.5 12h4" stroke="#eee" />
      <path d="M9 6h3" stroke="#b5562c" strokeWidth="2" />
      <path d="M9 9h3" stroke="#2d8a48" strokeWidth="2" />
      <path d="M9 12h3" stroke="#2c3a80" strokeWidth="2" />
    </>
  ),
};

type Entry = { t: string; k?: string; g?: string; sub?: boolean; tone?: "light" | "blue" };

const groups: Entry[][] = [
  [{ t: "Auf Komponente zentrieren", g: "center" }],
  [
    { t: "Suchen", k: "Strg+F", g: "find", sub: true },
    { t: "Komponente hier einfügen", k: "Alt+N", g: "insert" },
    { t: "Auswahl in eine neue Baugruppe zusammenfassen", k: "Alt+A", g: "group" },
  ],
  [
    { t: "Ausschneiden", k: "Strg+X", g: "cut" },
    { t: "Kopieren", k: "Strg+C", g: "copy" },
    { t: "Einfügen", k: "Strg+V", g: "paste" },
  ],
  [
    { t: "Drag'n'Drop Hierarchiemanipulation", g: "drag" },
    { t: "Alle Unterkomponenten auswählen", k: "Strg+Umschalt+C" },
    { t: "Kleine Teile auswählen", k: "Strg+Umschalt+P" },
    { t: "Ausgewählten Geometrien zusammenführen", g: "merge" },
  ],
  [{ t: "Sichtbarkeit zurücksetzen", g: "reset" }],
  [{ t: "Ausgewählte löschen", k: "Entf", g: "remove" }],
  [{ t: "Komponente exportieren", sub: true }],
  [{ t: "Eimer...", g: "bucket", sub: true }],
  [{ t: "Modellstruktur", k: "Alt+Umschalt+S", g: "tree", tone: "light" }, { t: "Geometrie-Manager" }],
  [{ t: "Unterdrücken", g: "suppress" }],
  [{ t: "Achsen-Manager", g: "axes" }],
  [{ t: "Schienenverbindungen", g: "rails" }],
  [{ t: "Show I/Os", g: "io" }],
  [{ t: "Show Properties", g: "props" }],
  [{ t: "Komponenten-Eigenschaften...", k: "Alt+Umschalt+M", g: "props", tone: "blue" }],
];

const tones = {
  plain: "text-[#e6e6e6]",
  light: "bg-[#d2d2d2] text-[#111]",
  blue: "bg-[#00a9f0] text-white",
};

function MenuRow({ e }: { e: Entry }) {
  return (
    <div className="flex h-[33px] items-center pr-[14px] pl-[13px]">
      <div className={`flex h-[23px] flex-1 items-center ${tones[e.tone ?? "plain"]}`}>
        <svg className="mb-[3px] h-4 w-4 shrink-0" viewBox="0 0 16 16" fill="none">
          {e.g ? glyphs[e.g] : null}
        </svg>
        <span className="ml-[19px] w-[362px] shrink-0">{e.t}</span>
        <span className="flex-1 tracking-[0.3px]">{e.k}</span>
        {e.sub ? (
          <svg className="mr-[5px] mb-[3px] h-[10px] w-[5px]" viewBox="0 0 5 10">
            <path d="M0 0v10l5-5z" fill="#fff" />
          </svg>
        ) : null}
      </div>
    </div>
  );
}

function ContextMenu() {
  return (
    <div className="absolute top-[121px] left-[111px] w-[575px] bg-[#212121] pt-1 pb-[2px] font-['Open_Sans','Noto_Sans',sans-serif] text-[15px] leading-none tracking-[-0.12px] whitespace-nowrap shadow-[3px_3px_3px_rgba(0,0,0,0.45)]">
      {groups.map((g, i) => (
        <React.Fragment key={i}>
          {i > 0 ? (
            <div className="h-[9px] pt-[2px] pr-[7px] pl-[5px]">
              <div className="h-[2px] border-t border-b border-t-[#141414] border-b-[#2c2c2c]" />
            </div>
          ) : null}
          {g.map((e) => (
            <MenuRow key={e.t} e={e} />
          ))}
        </React.Fragment>
      ))}
    </div>
  );
}

export default function App() {
  return (
    <div className="relative flex h-[1039px] w-[1921px] flex-col overflow-hidden border border-[#ffff00] bg-[#efefef]">
      <TitleBar />
      <MenuBar />
      <TopToolbar />
      <div className="flex h-[902px] shrink-0">
        <ModelDock />
        <div className="ml-[2px] flex min-w-0 flex-1 flex-col">
          <Viewport />
          <Console />
        </div>
      </div>
      <BottomToolbar />
      <StatusBar />
      <ContextMenu />
    </div>
  );
}
